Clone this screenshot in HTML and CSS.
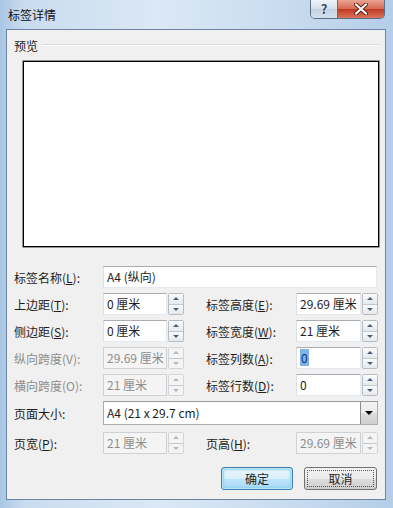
FILE: index.html
```html
<!DOCTYPE html>
<html lang="zh-CN">

<head>
    <meta charset="utf-8" />
    <title>标签详情</title>
    <link rel="stylesheet" href="styles.css">
</head>

<body>

    <div class="window">
        <div class="titlebar">
            <span class="title">标签详情</span>
            <div class="caption">
                <span class="cap-help">?</span>
                <span class="cap-close">
                    <svg width="16" height="12" viewBox="0 0 16 12">
                        <path d="M3 1.5 L13 10.5 M13 1.5 L3 10.5" stroke="#5a1e14" stroke-width="4" stroke-linecap="round" />
                        <path d="M3 1.5 L13 10.5 M13 1.5 L3 10.5" stroke="#ffffff" stroke-width="2.2" stroke-linecap="round" />
                    </svg>
                </span>
            </div>
        </div>

        <div class="client">
            <div class="group-head">
                <span>预览</span>
                <span class="rule"></span>
            </div>
            <div class="preview"></div>

            <div class="form">
                <div class="row">
                    <label>标签名称(<u>L</u>):</label>
                    <div class="text wide">A4 (纵向)</div>
                </div>

                <div class="row">
                    <label>上边距(<u>T</u>):</label>
                    <div class="field">
                        <div class="text">0 厘米</div>
                        <div class="spin"><span class="up"></span><span class="down"></span></div>
                    </div>
                    <label class="right">标签高度(<u>E</u>):</label>
                    <div class="field">
                        <div class="text">29.69 厘米</div>
                        <div class="spin"><span class="up"></span><span class="down"></span></div>
                    </div>
                </div>

                <div class="row">
                    <label>侧边距(<u>S</u>):</label>
                    <div class="field">
                        <div class="text">0 厘米</div>
                        <div class="spin"><span class="up"></span><span class="down"></span></div>
                    </div>
                    <label class="right">标签宽度(<u>W</u>):</label>
                    <div class="field">
                        <div class="text">21 厘米</div>
                        <div class="spin"><span class="up"></span><span class="down"></span></div>
                    </div>
                </div>

                <div class="row">
                    <label class="disabled">纵向跨度(V):</label>
                    <div class="field disabled">
                        <div class="text">29.69 厘米</div>
                        <div class="spin"><span class="up"></span><span class="down"></span></div>
                    </div>
                    <label class="right">标签列数(<u>A</u>):</label>
                    <div class="field">
                        <div class="text"><span class="selected">0</span></div>
                        <div class="spin"><span class="up"></span><span class="down"></span></div>
                    </div>
                </div>

                <div class="row">
                    <label class="disabled">横向跨度(O):</label>
                    <div class="field disabled">
                        <div class="text">21 厘米</div>
                        <div class="spin"><span class="up"></span><span class="down"></span></div>
                    </div>
                    <label class="right">标签行数(<u>D</u>):</label>
                    <div class="field">
                        <div class="text">0</div>
                        <div class="spin"><span class="up"></span><span class="down"></span></div>
                    </div>
                </div>

                <div class="row row-size">
                    <label>页面大小:</label>
                    <div class="select">
                        <span class="select-value">A4 (21 x 29.7 cm)</span>
                        <span class="select-btn"></span>
                    </div>
                </div>

                <div class="row">
                    <label>页宽(<u>P</u>):</label>
                    <div class="field disabled">
                        <div class="text">21 厘米</div>
                        <div class="spin"><span class="up"></span><span class="down"></span></div>
                    </div>
                    <label class="right">页高(<u>H</u>):</label>
                    <div class="field disabled">
                        <div class="text">29.69 厘米</div>
                        <div class="spin"><span class="up"></span><span class="down"></span></div>
                    </div>
                </div>
            </div>

            <div class="actions">
                <button type="button" class="btn btn-default">确定</button>
                <button type="button" class="btn btn-focus">取消</button>
            </div>
        </div>
    </div>

</body>

</html>
```

FILE: styles.css
```css
* {
    box-sizing: border-box;
    font-family: "Noto Sans CJK SC", "Liberation Sans", sans-serif;
}

body {
    margin: 0;
}

.window {
    width: 393px;
    height: 508px;
    padding: 0 7px 8px 6px;
    display: flex;
    flex-direction: column;
    background: linear-gradient(90deg, #a9c6e4 0%, #c9dcef 6%, #dbe8f5 40%, #c7dbef 75%, #b4cde8 100%);
}

.titlebar {
    height: 29px;
    display: flex;
    justify-content: space-between;
    align-items: flex-start;
    margin-left: -6px;
    margin-right: -7px;
    padding-left: 8px;
    padding-right: 8px;
}

.title {
    font-size: 12px;
    line-height: 12px;
    margin-top: 9px;
    color: #111;
}

.caption {
    display: flex;
    height: 19px;
    border: 1px solid #5b6f86;
    border-top: none;
    border-radius: 0 0 5px 5px;
    overflow: hidden;
}

.cap-help {
    width: 27px;
    height: 18px;
    font-size: 13px;
    font-weight: bold;
    line-height: 18px;
    text-align: center;
    color: #3b4a5c;
    text-shadow: 0 0 2px #fff;
    background: linear-gradient(#eef3f8, #d5e0eb 50%, #c2d1e0 51%, #d3e0ec);
    border-right: 1px solid #5b6f86;
}

.cap-close {
    width: 46px;
    height: 18px;
    display: flex;
    align-items: center;
    justify-content: center;
    background: linear-gradient(#e9a594, #d76a55 48%, #c13a22 52%, #d9735d);
}

.client {
    flex: 1;
    border: 1px solid #6b85a3;
    background: #f0f0f0;
    padding: 8px 6px 0 7px;
    display: flex;
    flex-direction: column;
}

.group-head {
    display: flex;
    align-items: center;
    height: 14px;
    font-size: 12px;
    color: #1e1e1e;
}

.rule {
    flex: 1;
    margin-left: 4px;
    margin-right: -1px;
    border-top: 1px solid #d5dadf;
    border-bottom: 1px solid #ffffff;
}

.preview {
    margin: 9px 0 0 9px;
    height: 186px;
    background: #ffffff;
    border: 1px solid #000;
    box-shadow: 0 0 0 0.5px #333;
}

.form {
    margin-top: 19px;
}

.row {
    display: grid;
    grid-template-columns: 89px 81px 22px 90px 82px;
    height: 22px;
    margin-bottom: 5px;
    align-items: center;
}

.row-size {
    height: 24px;
    margin-bottom: 7px;
}

label {
    font-size: 12px;
    color: #1e1e1e;
    white-space: nowrap;
}

label.right {
    grid-column: 4;
}

label.disabled {
    color: #8d8d8d;
}

.field {
    display: flex;
    height: 22px;
    gap: 1px;
}

.text {
    flex: 1;
    height: 22px;
    padding-left: 3px;
    font-size: 12px;
    line-height: 20px;
    color: #1e1e1e;
    background: #ffffff;
    border: 1px solid #e3e9ef;
    border-top-color: #abadb3;
    border-left-color: #dbdfe6;
    white-space: nowrap;
    overflow: hidden;
}

.text.wide {
    grid-column: 2 / 6;
    margin-right: 1px;
}

.selected {
    background: #7eb2e8;
    color: #10326e;
    padding: 0 1px;
}

.spin {
    width: 16px;
    height: 22px;
    display: flex;
    flex-direction: column;
    border: 1px solid #b5bcc4;
    border-radius: 2px;
    background: #f4f4f4;
}

.spin span {
    flex: 1;
    display: flex;
    align-items: center;
    justify-content: center;
    background: linear-gradient(#fbfbfb, #e6e9ec);
}

.spin .up {
    border-bottom: 1px solid #c3c8ce;
}

.spin .up::after {
    content: "";
    border-left: 3px solid transparent;
    border-right: 3px solid transparent;
    border-bottom: 3px solid #4c607a;
}

.spin .down::after {
    content: "";
    border-left: 3px solid transparent;
    border-right: 3px solid transparent;
    border-top: 3px solid #4c607a;
}

.field.disabled .text {
    color: #8d8d8d;
    background: #f4f4f4;
    border-color: #cfd1d4;
}

.field.disabled .spin {
    border-color: #d3d6d9;
}

.field.disabled .spin span {
    background: #f4f4f4;
}

.field.disabled .spin .up::after {
    border-bottom-color: #b1b8c1;
}

.field.disabled .spin .down::after {
    border-top-color: #b1b8c1;
}

.select {
    grid-column: 2 / 6;
    height: 24px;
    display: flex;
    background: #ffffff;
    border: 1px solid #acacac;
    border-top-color: #9a9a9a;
}

.select-value {
    flex: 1;
    padding-left: 3px;
    font-size: 12px;
    line-height: 22px;
    color: #1e1e1e;
}

.select-btn {
    width: 17px;
    display: flex;
    align-items: center;
    justify-content: center;
    border-left: 1px solid #8e8f8f;
    background: linear-gradient(#f2f2f2, #ebebeb 50%, #dddddd 51%, #cfcfcf);
}

.select-btn::after {
    content: "";
    border-left: 4px solid transparent;
    border-right: 4px solid transparent;
    border-top: 4px solid #000;
}

.actions {
    display: flex;
    justify-content: flex-end;
    gap: 11px;
    margin-top: 8px;
    margin-right: 2px;
}

.btn {
    width: 73px;
    height: 23px;
    font-size: 12px;
    color: #1e1e1e;
    border-radius: 3px;
    padding: 0;
    background: linear-gradient(#f2f2f2, #ebebeb 50%, #dddddd 51%, #cfcfcf);
    border: 1px solid #707070;
}

.btn-default {
    width: 72px;
    border-color: #3c7fb1;
    box-shadow: inset 0 0 0 1px #b9e4f7, inset 0 0 2px 2px #8fd3f3;
    background: linear-gradient(#eaf6fd, #d9f0fc 50%, #bee6fd 51%, #a7d9f5);
}

.btn-focus {
    outline: 1px dotted #555;
    outline-offset: -4px;
}
```
